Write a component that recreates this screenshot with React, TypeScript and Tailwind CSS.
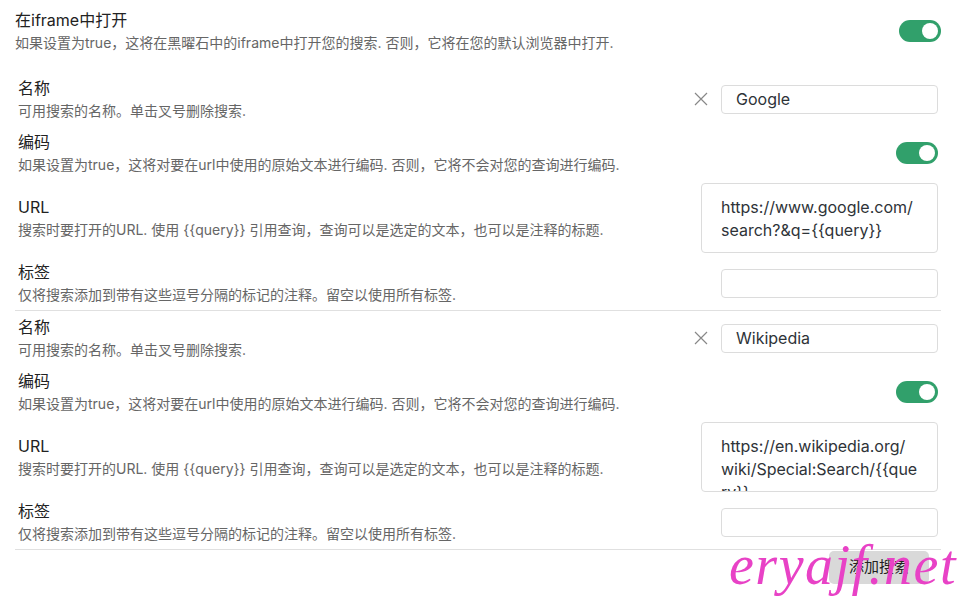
import React from "react";

type SearchItem = {
  name: string;
  urlLines: string[];
};

const searches: SearchItem[] = [
  { name: "Google", urlLines: ["https://www.google.com/", "search?&q={{query}}"] },
  {
    name: "Wikipedia",
    urlLines: ["https://en.wikipedia.org/", "wiki/Special:Search/{{que", "ry}}"],
  },
];

const Toggle = () => (
  <div className="w-[42px] h-[22px] rounded-full bg-[#31a06b] flex items-center justify-end pr-[3px] shrink-0">
    <div className="w-[16px] h-[16px] rounded-full bg-white" />
  </div>
);

const Info = ({ title, desc }: { title: string; desc: string }) => (
  <div className="flex flex-col pt-[2px]">
    <div className="text-[16px] leading-[22px] text-[#222]">{title}</div>
    <div className="text-[14px] leading-[24px] text-[#666]">{desc}</div>
  </div>
);

const CloseIcon = () => (
  <svg width="14" height="14" viewBox="0 0 14 14" className="shrink-0">
    <path d="M1 1 L13 13 M13 1 L1 13" stroke="#888" strokeWidth="1.2" fill="none" />
  </svg>
);

const SearchBlock = ({ item }: { item: SearchItem }) => (
  <div className="flex flex-col border-b border-[#e0e0e0] px-[3px]">
    <div className="h-[54px] flex items-center justify-between">
      <Info title="名称" desc="可用搜索的名称。单击叉号删除搜索." />
      <div className="flex items-center gap-[13px]">
        <CloseIcon />
        <div className="w-[217px] h-[29px] border border-[#dcdcdc] rounded-[4px] pl-[14px] flex items-center text-[16px] text-[#2e3338]">
          {item.name}
        </div>
      </div>
    </div>
    <div className="h-[54px] flex items-center justify-between">
      <Info
        title="编码"
        desc="如果设置为true，这将对要在url中使用的原始文本进行编码. 否则，它将不会对您的查询进行编码."
      />
      <Toggle />
    </div>
    <div className="h-[76px] flex items-center justify-between">
      <Info
        title="URL"
        desc="搜索时要打开的URL. 使用 {{query}} 引用查询，查询可以是选定的文本，也可以是注释的标题."
      />
      <div className="w-[237px] h-[70px] border border-[#dcdcdc] rounded-[4px] pl-[19px] pt-[12px] overflow-hidden text-[16px] leading-[23px] text-[#2e3338]">
        {item.urlLines.map((line) => (
          <div key={line} className="whitespace-nowrap">
            {line}
          </div>
        ))}
      </div>
    </div>
    <div className="h-[54px] flex items-center justify-between">
      <Info title="标签" desc="仅将搜索添加到带有这些逗号分隔的标记的注释。留空以使用所有标签." />
      <div className="w-[217px] h-[29px] border border-[#dcdcdc] rounded-[4px]" />
    </div>
  </div>
);

export default function App() {
  return (
    <div
      className="relative w-[957px] h-[613px] bg-white overflow-hidden pl-[15px] pr-[16px] pt-[4px]"
      style={{ fontFamily: 'Inter, "Noto Sans CJK SC", sans-serif' }}
    >
      <div className="h-[54px] flex items-center justify-between">
        <Info
          title="在iframe中打开"
          desc="如果设置为true，这将在黑曜石中的iframe中打开您的搜索. 否则，它将在您的默认浏览器中打开."
        />
        <Toggle />
      </div>
      <div className="mt-[14px] flex flex-col">
        {searches.map((s) => (
          <SearchBlock key={s.name} item={s} />
        ))}
      </div>
      <div className="flex justify-end pr-[12px] pt-[1px]">
        <button className="w-[100px] h-[33px] rounded-[5px] bg-[#d9d9d9] text-[15px] text-[#222]">
          添加搜索
        </button>
      </div>
      <div
        className="absolute left-[729px] top-[537px] text-[56px] italic text-[#e842c6] leading-none tracking-[1.5px]"
        style={{ fontFamily: '"Liberation Serif", serif' }}
      >
        eryajf.net
      </div>
    </div>
  );
}
